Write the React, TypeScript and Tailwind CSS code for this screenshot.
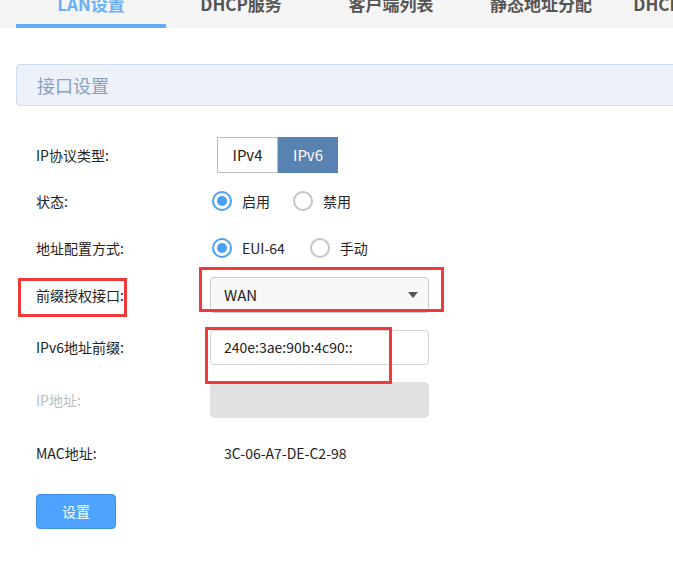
import React from 'react';

const font = { fontFamily: '"Microsoft YaHei", "Noto Sans CJK SC", "Noto Sans", sans-serif' };

const tabs = ['LAN设置', 'DHCP服务', '客户端列表', '静态地址分配', 'DHCP静态绑定'];

const Radio: React.FC<{ checked?: boolean; label: string }> = ({ checked, label }) => (
    <div className="flex items-center">
        <span className={`w-[20px] h-[20px] rounded-full border-2 flex items-center justify-center bg-white ${checked ? 'border-[#4aa0f8]' : 'border-[#c4c4c4]'}`}>
            {checked && <span className="w-[10px] h-[10px] rounded-full bg-[#4aa0f8]" />}
        </span>
        <span className="ml-[10px] text-[14px] text-[#222]">{label}</span>
    </div>
);

const Row: React.FC<{ label: string; muted?: boolean; className?: string; children: React.ReactNode }> = ({ label, muted, className, children }) => (
    <div className={`flex items-center h-[36px] ${className || ''}`}>
        <div className={`w-[174px] pl-[36px] text-[14px] ${muted ? 'text-[#bdbdbd]' : 'text-[#222]'}`}>{label}</div>
        {children}
    </div>
);

const App: React.FC = () => {
    return (
        <div className="relative w-[673px] h-[570px] bg-white overflow-hidden" style={font}>
            {/* tabs */}
            <div className="flex h-[28px] bg-[#f5f5f5] pl-[16px]">
                {tabs.map((t, i) => (
                    <div key={t} className="w-[150px] shrink-0 flex flex-col justify-between items-center">
                        <span className={`-mt-[6px] leading-[20px] text-[17px] font-bold whitespace-nowrap ${i === 0 ? 'text-[#6ab0f7]' : 'text-[#555]'}`}>{t}</span>
                        <div className={`w-full h-[4px] ${i === 0 ? 'bg-[#62adf6]' : ''}`} />
                    </div>
                ))}
            </div>

            {/* section header */}
            <div className="mt-[36px] ml-[16px] -mr-[10px] h-[42px] rounded-[4px] border border-[#cfdcec] bg-[#edf2fa] flex items-center pl-[20px]">
                <span className="text-[18px] text-[#8aa0bd]">接口设置</span>
            </div>

            <div className="mt-[31px]">
                <Row label="IP协议类型:">
                    <div className="flex ml-[43px] h-[36px]">
                        <div className="w-[61px] border border-[#bdbdbd] flex items-center justify-center text-[15px] text-[#222]">IPv4</div>
                        <div className="w-[60px] bg-[#5882b2] flex items-center justify-center text-[15px] text-white">IPv6</div>
                    </div>
                </Row>
                <Row label="状态:" className="mt-[10px]">
                    <div className="flex ml-[38px] gap-[23px]">
                        <Radio checked label="启用" />
                        <Radio label="禁用" />
                    </div>
                </Row>
                <Row label="地址配置方式:" className="mt-[11px]">
                    <div className="flex ml-[38px] gap-[25px]">
                        <Radio checked label="EUI-64" />
                        <Radio label="手动" />
                    </div>
                </Row>
                <Row label="前缀授权接口:" className="mt-[11px]">
                    <div className="ml-[36px] w-[219px] h-[36px] rounded-[4px] border border-[#cccccc] bg-[#f8f8f8] flex items-center justify-between pl-[13px] pr-[10px]">
                        <span className="text-[15px] text-[#222]">WAN</span>
                        <svg width="10" height="6" viewBox="0 0 10 6"><path d="M0 0h10L5 6z" fill="#555" /></svg>
                    </div>
                </Row>
                <Row label="IPv6地址前缀:" className="mt-[16px]">
                    <div className="ml-[36px] w-[219px] h-[35px] rounded-[4px] border border-[#d4d4d4] bg-white flex items-center pl-[13px]">
                        <span className="text-[14px] text-[#222]">240e:3ae:90b:4c90::</span>
                    </div>
                </Row>
                <Row label="IP地址:" muted className="mt-[17px]">
                    <div className="ml-[36px] w-[219px] h-[36px] rounded-[5px] bg-[#e1e1e1]" />
                </Row>
                <Row label="MAC地址:" className="mt-[17px]">
                    <span className="ml-[50px] text-[14px] text-[#222]">3C-06-A7-DE-C2-98</span>
                </Row>
                <div className="mt-[23px] ml-[36px]">
                    <button className="w-[80px] h-[35px] rounded-[4px] bg-[#4da3ff] border border-[#3d8fe6] text-white text-[14px]">设置</button>
                </div>
            </div>

            {/* red annotation boxes */}
            <div className="absolute left-[18px] top-[278px] w-[109px] h-[39px] border-[3px] border-[#f03a3a]" />
            <div className="absolute left-[199px] top-[267px] w-[245px] h-[45px] border-[3px] border-[#f03a3a]" />
            <div className="absolute left-[205px] top-[327px] w-[187px] h-[57px] border-[3px] border-[#f03a3a]" />
        </div>
    );
};

export default App;
